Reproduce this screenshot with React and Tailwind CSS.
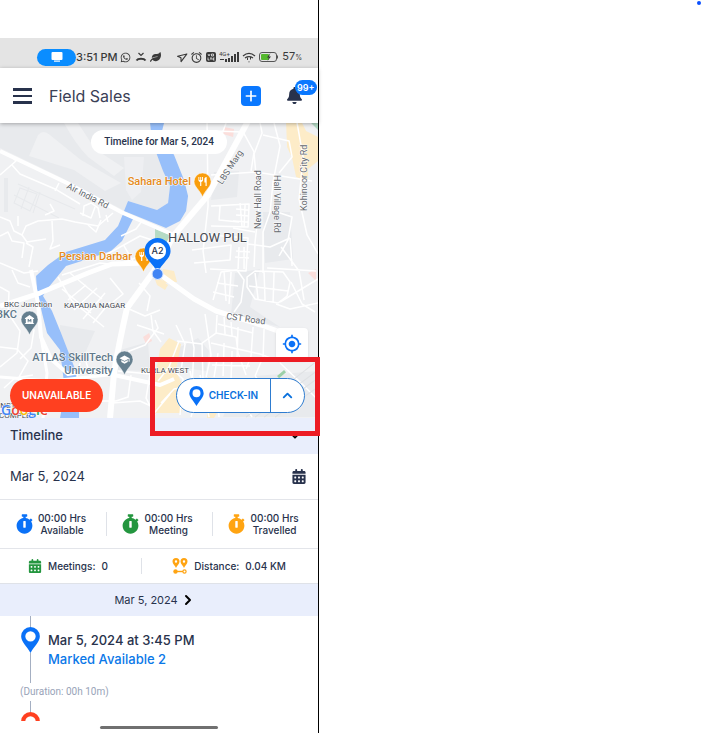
import { FaBell, FaLeaf, FaStopwatch, FaWhatsapp } from 'react-icons/fa';
import { FaCalendarDays } from 'react-icons/fa6';
import { MdAlarm, MdMyLocation, MdMuseum, MdRestaurant, MdSchool } from 'react-icons/md';
import { ChevronDown, ChevronRight, ChevronUp, Navigation, Plus } from 'lucide-react';

const PinIcon = ({ className }) => (
    <svg viewBox="0 0 18 25" className={className} fill="currentColor" aria-hidden="true">
        <path
            fillRule="evenodd"
            d="M9 0a9 9 0 0 0-9 9c0 5.500 5.500 9.500 9 16 3.500-6.500 9-10.500 9-16a9 9 0 0 0-9-9Zm0 4a5 5 0 1 1 0 10A5 5 0 0 1 9 4Z"
        />
    </svg>
);

const RouteIcon = () => (
    <svg viewBox="0 0 16 16" className="h-4 w-4 text-[#ffa412]" fill="currentColor" aria-hidden="true">
        <path fillRule="evenodd" d="M4 0a3.500 3.500 0 0 0-3.500 3.500C.5 6 3 7.500 4 10c1-2.500 3.500-4 3.500-6.500A3.500 3.500 0 0 0 4 0Zm0 2.300a1.200 1.200 0 1 1 0 2.400 1.200 1.200 0 0 1 0-2.400Z" />
        <path fillRule="evenodd" d="M12 0a3.500 3.500 0 0 0-3.500 3.500c0 2.500 2.500 4 3.500 6.500 1-2.500 3.500-4 3.500-6.500A3.500 3.500 0 0 0 12 0Zm0 2.300a1.200 1.200 0 1 1 0 2.400 1.200 1.200 0 0 1 0-2.400Z" />
        <circle cx="3.500" cy="13.500" r="2.200" />
        <path d="M4 12.800h7v1.400H4z" />
        <circle cx="12.500" cy="13.500" r="1.600" fill="none" stroke="currentColor" strokeWidth="1.200" />
    </svg>
);

const StatusBar = () => (
    <div className="flex h-[30px] items-center bg-[#e4e4e4] pt-2 pl-[37px] text-[#3a3a3a]">
        <span className="flex h-[17px] w-[39px] shrink-0 items-center justify-center rounded-full bg-[#0a8dff]">
            <svg viewBox="0 0 12 10" className="h-[10px] w-3" fill="white">
                <rect x="0.500" width="11" height="8" rx="1" />
                <rect x="3" y="8.500" width="6" height="1.200" />
            </svg>
        </span>
        <span className="text-[11px] leading-4 font-medium whitespace-nowrap">3:51 PM</span>
        <FaWhatsapp className="ml-[2px] h-[11px] w-[11px] shrink-0" />
        <svg viewBox="0 0 12 10" className="ml-1 h-[10px] w-3 shrink-0" fill="none" stroke="currentColor">
            <path d="m3.500 1 2.500 2.500L8.500 1" strokeWidth="1.200" />
            <path d="M1.500 8.500C3 6.300 9 6.300 10.500 8.500" strokeWidth="2" />
        </svg>
        <FaLeaf className="ml-[3px] h-[10px] w-[11px] shrink-0" />
        <div className="ml-auto flex items-center gap-[3px] pr-4">
            <Navigation className="h-[11px] w-[11px] rotate-12" strokeWidth={2.5} />
            <MdAlarm className="h-[13px] w-[13px]" />
            <svg viewBox="0 0 10 10" className="h-[10px] w-[10px]">
                <rect width="10" height="10" rx="2" fill="#3a3a3a" />
                <path d="m2 2 1 2 1-2m1.500 0h2v2h-2zM2 5.500V8h1.500M4 6h2M5 6v2M8.500 6H7v2h1.500M7 7h1" fill="none" stroke="white" strokeWidth="0.700" />
            </svg>
            <svg viewBox="0 0 20 12" className="h-3 w-5" fill="currentColor">
                <text x="0" y="5" fontSize="6" fontFamily="Roboto">4G+</text>
                <path d="M1 8h4v1H1zm5 0h2v3H6zm3-1h2v4H9zm3-2h2v6h-2zm3-2h2v8h-2zm3-2h2v10h-2z" />
            </svg>
            <svg viewBox="0 0 14 11" className="h-[11px] w-[14px]" fill="none" stroke="currentColor">
                <path d="M1 4c4-3.500 8-3.500 12 0M3 6c3-2 5-2 8 0M7 9.500v.8" strokeWidth="1.300" />
                <path d="M5.500 8V5.500M8.500 5v2.500" />
            </svg>
            <svg viewBox="0 0 20 10" className="h-[10px] w-5" fill="none">
                <rect x="0.500" y="0.500" width="17" height="9" rx="2.500" stroke="#555" />
                <path d="M18.500 3.500v3" stroke="#555" />
                <rect x="2" y="2" width="8" height="6" rx="1" fill="#55b82e" />
                <path d="M11.500 1 8 5.500h2L8.500 9 12 4.500h-2z" fill="#333" />
            </svg>
            <span className="text-[11px] leading-4">
                57<span className="text-[7px]">%</span>
            </span>
        </div>
    </div>
);

const Header = () => (
    <header className="relative z-10 flex h-[55px] items-center bg-white pr-4 pl-[13px] shadow-[0_1px_4px_rgba(0,0,0,0.300)]">
        <button type="button" aria-label="Open menu" className="flex w-[19px] flex-col gap-1">
            <span className="h-[3px] w-full bg-[#28324c]" />
            <span className="h-[2px] w-full bg-[#28324c]" />
            <span className="h-[3px] w-full bg-[#28324c]" />
        </button>
        <h1 className="ml-[17px] text-base leading-6 text-[#3a4056]">Field Sales</h1>
        <button
            type="button"
            aria-label="Add"
            className="ml-auto flex h-5 w-5 items-center justify-center rounded bg-[#0a78ff] text-white"
        >
            <Plus className="h-4 w-4" strokeWidth={2.5} />
        </button>
        <button type="button" aria-label="Notifications" className="relative ml-[26px] text-[#28324c]">
            <FaBell className="h-[17px] w-[15px]" />
            <span className="absolute -top-[7px] left-2 rounded-full bg-[#0a78ff] px-[2px] text-[9px] leading-[15px] font-semibold text-white">
                99+
            </span>
        </button>
    </header>
);

const minorRoads = [
    'M0 52 16 38 12 34M12 42 20 51 55 66 80 81M59 60 55 68',
    'M0 94 10 98 14 108 22 112 26 103 38 98 62 96 75 99 98 103 113 90',
    'M18 93 18 103M52 98 53 118 50 126 60 122M22 112 27 119 46 116M26 120 33 124 29 144',
    'M0 113 8 109 12 118 24 120 22 135M45 92 54 88 50 81M83 93 84 83 91 80 98 85 100 95',
    'M80 90 91 95 95 84M88 102 96 109 101 97M106 92 108 99',
    'M104 133 140 113 152 117M124 123 134 140M121 113 136 106 142 98',
    'M62 152 100 140 118 142 140 133M0 140 24 150 38 148M12 147 18 160 30 164',
    'M58 154 72 178 104 204M70 150 88 165 102 176M62 166 91 190M68 177 86 162M74 187 97 165M83 196 105 170M93 200 110 179',
    'M110 155 123 171 113 179M0 164 9 169 8 190 20 208 17 230 0 244M20 193 34 207 31 225 20 236',
    'M129 186 145 193 160 187M139 160 150 173 147 188M137 202 164 211M151 192 153 208 161 219',
    'M119 232 145 222 158 205 155 197M118 248 150 251 146 275 155 292M131 252 128 274 116 278M112 280 140 278 155 285',
    'M207 0 208 83 203 128 206 150M226 0 222 11 207 17M211 52 256 49 312 58M214 8 243 9 254 29 251 48',
    'M260 0 262 10 254 31 256 52 261 65 255 119 254 144M274 0 280 23 273 59 270 89 263 109 263 150',
    'M297 0 303 34 299 76 307 112 318 131M263 12 289 18 292 34 279 50',
    'M211 83 249 81 248 104 211 103M220 83 219 97 239 99M210 112 248 115 246 148 210 146M192 127 231 122 230 137 194 140',
    'M233 105 255 109M248 121 270 124 290 115M277 89 292 94 288 117 279 133M290 115 292 143M267 145 316 148M281 124 299 148',
    'M240 80 242 104M236 86 248 87M236 92 249 93M245 82 244 104M233 98 248 99M236 128 250 129M235 134 249 135M239 124 238 146M244 124 244 146',
    'M213 177 221 149 237 147 244 157 241 179 234 189M217 160 238 163M213 169 234 174M224 148 226 178M231 149 229 181',
    'M247 154 255 148 283 149 290 159 287 173 278 180 255 176 247 164ZM255 150 258 176M264 149 265 178M274 149 273 179M249 163 288 168',
    'M280 179 318 156M276 181 290 186 318 180M291 159 302 181 315 189M299 148 304 177',
    'M217 192 216 210 236 214 238 230 246 252M224 194 225 211M231 199 232 213M238 204 237 234M218 201 253 210M216 210 202 220 203 260',
    'M205 191 211 232 206 254M211 220 260 231 281 239M218 230 214 254M224 220 223 253M232 228 231 255M212 242 250 243',
    'M253 204 251 233 246 246M264 206 263 234 255 253M177 218 202 221M176 202 185 221 181 247M190 205 194 225 192 262',
    'M158 258 169 244 179 218M161 280 174 266 199 262M170 244 183 256 180 292M151 294 170 271M190 248 196 275 191 294',
    'M200 252 209 294M215 255 219 294M202 276 229 288M240 276 252 294M255 253 270 272M280 240 302 261 318 277',
    'M0 224 17 226 28 238 19 254M4 265 15 255 33 252M80 240 77 254M86 239 91 254M80 262 98 278 116 278',
];

const places = [
    { x: 194, y: 50, fill: '#f99d0c', Icon: MdRestaurant },
    { x: 135, y: 125, fill: '#f99d0c', Icon: MdRestaurant },
    { x: 21, y: 188, fill: '#657f8f', Icon: MdMuseum },
    { x: 116, y: 228, fill: '#657f8f', Icon: MdSchool },
];

const MapCanvas = () => (
    <svg viewBox="0 0 318 295" preserveAspectRatio="xMidYMid slice" className="absolute inset-0 h-full w-full" fontFamily="Roboto, sans-serif">
        <rect width="318" height="295" fill="#f0f1f3" />

        {/* Airport and built-up blocks */}
        <g fill="#e8eaed">
            <path d="M0 0h150l7 32 13 31-2 17-11 7-29-9-3 10L58 53 0 25Z" />
            <path d="m235 150 25-4-10 38 30 20-32-8-17-5Z" />
            <path d="m214 49 25-1-2 26-26 3ZM178 225l20-10 11 13-3 20-29-4Z" />
            <path d="M263 89h27l3 47-28 4ZM60 202l35 6-14 31-20 1Z" />
            <path d="M4 55h4v34H4zM120 227l28-8 2 29-34-1Z" />
            <path d="m230 275 25-22 63-5v46h-95Z" />
        </g>
        <path d="M29 33 38 12q5-6 12 0l31 25 40 23-16 8-31-21Z" fill="#f0f1f3" />
        <path d="M64 0q12 22 24 34l26 19 10-8-29-19L78 0Z" fill="#f0f1f3" />
        <path d="M124 34l20 0-3 35-9 8-6-10Z" fill="#eeeff2" />
        <g fill="none" stroke="#e7e9ec">
            <path d="m18 61 57 25M14 72l45 23M29 64l-8 22M40 69l-7 21" />
            <path d="m20 65 17 6-7 17-16-8Z" />
        </g>

        {/* Commercial areas */}
        <g fill="#fdecc8">
            <path d="m286 0 16 0 4 8 12 6v24l-10 8v12l-12-4-4-19-5-11ZM163 146l11 2 3 11-13 1-4-6Z" />
            <path d="m160 226 9-11 12 6-5 27 10 22-5 20h-28l1-30ZM153 151l7 5 8 6-3 5-8-5ZM208 254l12 3 6 16-12 22h-7Z" />
        </g>
        <g fill="#fbdedb">
            <path d="m224 4 10 2-1 8-10-3ZM316 146v12l-8-8ZM143 214l6-4 3 8-6 3Z" />
        </g>
        <path d="m155 106 15 6-5 14-10-3ZM311 0h7v7Z" fill="#b5dbc5" />

        {/* Mithi river */}
        <g fill="#97bffa">
            <path d="M150 0h14l-3 12 13 20 10 25 4 16-2 15-6 10-14 7-42-17 4-10 29 9 11-7 2-17-7-15-6-16-5-14Z" />
            <path d="m123 91 10 5-11 22-11 10-23 8-22 7-18 22-5 8 9 15 9 22 14 36 5 22h-1v27H60l5-27-5-41-13-17-5-20-5-23-1-14 12-11 18-13 39-12 13-14Z" />
        </g>

        <g fill="none" stroke="white" strokeWidth="1.500" strokeLinejoin="round">
            {minorRoads.map((d) => (
                <path key={d} d={d} />
            ))}
        </g>

        {/* Arterial roads */}
        <g fill="none" stroke="white" strokeLinejoin="round">
            <path d="M0 28 67 60 123 90 174 112" strokeWidth="4" />
            <path d="M248-2 208 72 174 112 154 148 127 185Q119 220 114 250L110 295" strokeWidth="6" />
            <path d="m158 150 36 26 22 12 45 14 22 8" strokeWidth="5" />
            <path d="M0 183 40 170 88 150 112 141 146 140" strokeWidth="5" />
            <path d="M31 147 38 180 41 214 51 236 68 251 92 247 114 252 160 262 174 256" strokeWidth="4" />
            <path d="M41 214 47 250 43 295M0 254 50 258 108 252" strokeWidth="3" />
        </g>
        <path d="m246 294 72-57M255 294l63-47M264 294l54-39M275 294l43-30" stroke="#dfe1e4" fill="none" />
        <path d="m278 254 7-6" stroke="#9cd0a7" strokeWidth="3" />

        {/* Street names */}
        <g fill="#62676d" fontSize="9" stroke="white" strokeWidth="1" paintOrder="stroke">
            <text transform="translate(66 65) rotate(27)">Air India Rd</text>
            <text transform="translate(222 62) rotate(-57)">LBS Marg</text>
            <text transform="translate(261 106) rotate(-90)">New Hall Road</text>
            <text transform="translate(274 52) rotate(90)">Hall Village Rd</text>
            <text transform="translate(307 88) rotate(-90)">Kohinoor City Rd</text>
            <text transform="translate(226 196) rotate(8)">CST Road</text>
        </g>

        <g stroke="white" strokeWidth="1" paintOrder="stroke">
            <g fill="#454950">
                <text x="168" y="119" fontSize="13">HALLOW PUL</text>
                <text x="4" y="184" fontSize="8">BKC Junction</text>
                <text x="64" y="185" fontSize="8">KAPADIA NAGAR</text>
                <text x="141" y="250" fontSize="8">KURLA WEST</text>
                <text x="-2" y="285" fontSize="8">INST</text>
                <text x="-1" y="295" fontSize="8">COMPLEX</text>
            </g>
            <g fill="#e58a20" fontSize="11" fontWeight="500" textAnchor="end">
                <text x="191" y="62">Sahara Hotel</text>
                <text x="132" y="137">Persian Darbar</text>
            </g>
            <g fill="#60788a" fontSize="11" fontWeight="500" textAnchor="end">
                <text x="17" y="195">BKC</text>
                <text x="113" y="238">ATLAS SkillTech</text>
                <text x="113" y="251">University</text>
            </g>
        </g>

        {places.map(({ x, y, fill, Icon }) => (
            <g key={`${x}-${y}`} transform={`translate(${x} ${y})`}>
                <path d="M8.500 0A8.500 8.500 0 0 0 0 8.500C0 14 6 17 8.500 24 11 17 17 14 17 8.500A8.500 8.500 0 0 0 8.500 0Z" fill={fill} stroke="white" strokeWidth="0.500" />
                <Icon x="3" y="3" size={11} color="white" />
            </g>
        ))}

        {/* Current position */}
        <path d="M157.500 115a13 13 0 0 0-13 13c0 8 8 11 13 22 5-11 13-14 13-22a13 13 0 0 0-13-13Z" fill="#0a71f7" />
        <circle cx="157.500" cy="128" r="8.500" fill="white" />
        <text x="157.500" y="131" fontSize="9" fontWeight="500" fontFamily="Inter, sans-serif" textAnchor="middle" fill="#28324c">A2</text>
        <circle cx="157.500" cy="151" r="5.500" fill="#4285f4" stroke="#dbe7fd" />

        <text x="1" y="292" fontSize="14" fontFamily="Open Sans, sans-serif" fontWeight="600" stroke="white" strokeWidth="1" paintOrder="stroke">
            <tspan fill="#4285f4">G</tspan>
            <tspan fill="#ea4335">o</tspan>
            <tspan fill="#fbbc05">o</tspan>
            <tspan fill="#4285f4">g</tspan>
            <tspan fill="#34a853">l</tspan>
            <tspan fill="#ea4335">e</tspan>
        </text>
    </svg>
);

const MapView = () => (
    <section className="relative flex h-[295px] flex-col justify-between overflow-hidden">
        <MapCanvas />
        <p className="relative mx-auto mt-[7px] rounded-full bg-white px-[13px] font-[Roboto,sans-serif] text-[10px] leading-6 font-medium text-[#28324c]">
            Timeline for Mar 5, 2024
        </p>
        <div className="relative flex flex-col items-end">
            <button
                type="button"
                aria-label="My location"
                className="mr-[10px] mb-[18px] flex h-8 w-8 items-center justify-center rounded-sm bg-white text-[#0a71f7] shadow"
            >
                <MdMyLocation className="h-5 w-5" />
            </button>
            <div className="flex w-full items-center justify-between pr-[13px] pb-[5px] pl-[10px]">
                <button type="button" className="h-[33px] rounded-full bg-[#ff4020] px-3 text-[10px] font-semibold text-white">
                    UNAVAILABLE
                </button>
                <div className="flex h-[35px] rounded-full border border-[#2e7cd0] bg-white text-[#0a71dd]">
                    <button type="button" className="flex items-center gap-[5px] px-3 text-[10px] font-semibold">
                        <PinIcon className="h-5 w-[15px] text-[#0a71f7]" />
                        CHECK-IN
                    </button>
                    <button type="button" aria-label="More options" className="w-[34px] border-l border-[#2e7cd0] pl-[9px]">
                        <ChevronUp className="h-[15px] w-[15px]" strokeWidth={3} />
                    </button>
                </div>
            </div>
        </div>
    </section>
);

const stats = [
    { label: 'Available', color: 'text-[#0a71f7]' },
    { label: 'Meeting', color: 'text-[#24963f]' },
    { label: 'Travelled', color: 'text-[#ffa412]' },
];

const Stats = () => (
    <>
        <div className="flex h-[49px] items-center border-b border-[#e3e5ea]">
            {stats.map(({ label, color }, i) => (
                <div key={label} className="flex flex-1 items-center">
                    {i > 0 && <span className="h-6 w-px bg-[#dfe2e8]" />}
                    <div className="flex flex-1 items-center justify-center gap-[5px] pr-1">
                        <FaStopwatch className={`h-5 w-[17px] ${color}`} />
                        <p className="text-center text-[10px] leading-[12px] font-medium">
                            00:00 Hrs
                            <br />
                            {label}
                        </p>
                    </div>
                </div>
            ))}
        </div>
        <div className="flex h-[35px] items-center border-b border-[#dfe2e8] text-[10px] font-medium">
            <div className="flex w-4/9 items-center gap-[6px] pl-7">
                <FaCalendarDays className="h-[14px] w-[14px] text-[#24963f]" />
                <span>Meetings:</span>
                <span>0</span>
            </div>
            <span className="h-4 w-px bg-[#dfe2e8]" />
            <div className="flex flex-1 items-center gap-[6px] pl-[30px]">
                <RouteIcon />
                <span>Distance:</span>
                <span>0.04 KM</span>
            </div>
        </div>
    </>
);

const TimelineEntry = () => (
    <section className="flex flex-1 flex-col">
        <div className="flex h-[67px] gap-2 pl-[21px]">
            <div className="flex w-[19px] flex-col items-center">
                <span className="h-[11px] w-px bg-[#a4afc2]" />
                <PinIcon className="h-[26px] w-[19px] text-[#0a71f7]" />
                <span className="w-px flex-1 bg-[#a4afc2]" />
            </div>
            <div className="pt-[15px] text-[13px] leading-[19px]">
                <h2 className="font-medium">Mar 5, 2024 at 3:45 PM</h2>
                <p className="font-medium text-[#0a78e8]">Marked Available 2</p>
            </div>
        </div>
        <p className="pl-5 font-[Roboto,sans-serif] text-[10px] leading-[18px] text-[#98a3b8]">(Duration: 00h 10m)</p>
        <div className="box-content flex h-5 w-[19px] flex-col items-center overflow-hidden pl-[21px]">
            <span className="h-[11px] w-px shrink-0 bg-[#a4afc2]" />
            <PinIcon className="h-[26px] w-[19px] shrink-0 text-[#ff4020]" />
        </div>
        <span className="mx-auto mt-[5px] h-[3px] w-[118px] rounded-full bg-[#707070]" />
    </section>
);

export default function App() {
    return (
        <div className="relative flex min-h-screen bg-white font-[Inter,sans-serif] text-[#28324c]">
            <main className="flex w-5/11 flex-col border-r border-black pt-[38px]">
                <StatusBar />
                <Header />
                <div className="relative">
                    <MapView />
                    <div className="flex h-9 items-center justify-between bg-[#e9eefc] pr-4 pl-[10px]">
                        <h2 className="text-[13px] font-medium">Timeline</h2>
                        <ChevronDown className="h-[14px] w-[14px] text-black" strokeWidth={3} />
                    </div>
                    {/* Callout around the check-in control */}
                    <div className="pointer-events-none absolute top-[234px] -right-[2px] h-[79px] w-[170px] border-5 border-[#ed1c24]" />
                </div>
                <div className="flex h-[46px] items-center justify-between border-b border-[#e3e5ea] pr-3 pl-[10px]">
                    <span className="text-[13px]">Mar 5, 2024</span>
                    <button type="button" aria-label="Pick a date">
                        <FaCalendarDays className="h-[15px] w-[14px]" />
                    </button>
                </div>
                <Stats />
                <button type="button" className="flex h-8 items-center justify-center gap-[2px] bg-[#e9eefc] pr-2 text-[11px]">
                    Mar 5, 2024
                    <ChevronRight className="h-4 w-4 text-black" strokeWidth={3} />
                </button>
                <TimelineEntry />
            </main>
            <span className="absolute top-[1px] right-[1px] h-1 w-1 rounded-full bg-[#0a50ff]" />
        </div>
    );
}
